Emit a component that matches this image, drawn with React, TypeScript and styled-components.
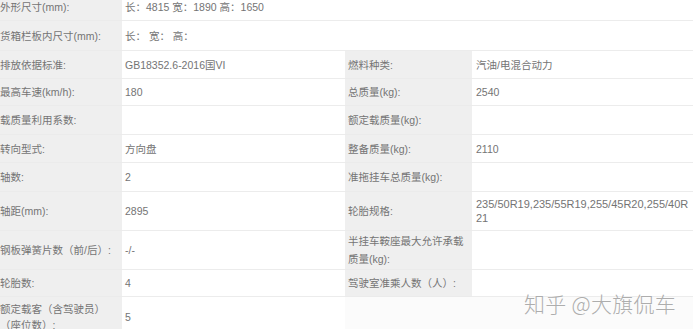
import React from "react";
import styled, { createGlobalStyle } from "styled-components";

const Global = createGlobalStyle`
  html, body { margin: 0; padding: 0; background: #ffffff; overflow: hidden; }
  body { width: 693px; height: 329px; }
`;

const Page = styled.div`
  position: relative;
  width: 693px;
  height: 329px;
  overflow: hidden;
  background: #fbfbfb;
  font-family: "Liberation Sans", "Noto Sans CJK SC", sans-serif;
  font-size: 10.5px;
  color: #747474;
`;

const Table = styled.div`
  margin-top: -7px;
  margin-left: -4px;
  width: 697px;
  display: flex;
  flex-direction: column;
`;

const Row = styled.div<{ $h: number }>`
  display: grid;
  grid-template-columns: 126px 223px 127px 1fr;
  height: ${(p) => p.$h}px;
`;

const Label = styled.div`
  background: #efefef;
  display: flex;
  align-items: center;
  padding: 0 9px 0 4px;
  line-height: 16px;
  border-bottom: 1px solid #ebebeb;
`;

const RightLabel = styled(Label)`
  padding: 0 3px 0 3px;
  line-height: 18px;
`;

const Value = styled.div<{ $span?: number }>`
  background: #ffffff;
  grid-column: span ${(p) => p.$span ?? 1};
  display: flex;
  align-items: center;
  padding: 0 0 0 3px;
  line-height: 14px;
  border-bottom: 1px solid #ececec;
`;

const RightValue = styled(Value)`
  padding-left: 4px;
  white-space: nowrap;
`;

const Empty = styled.div`
  grid-column: span 2;
  background: #fbfbfb;
`;

const Lines = styled.div`
  display: flex;
  flex-direction: column;
  font-size: 11px;
`;

const Watermark = styled.div`
  position: absolute;
  left: 524px;
  top: 288px;
  font-family: "Noto Sans CJK SC", sans-serif;
  font-weight: 300;
  font-size: 21px;
  letter-spacing: 0.3px;
  color: #adadad;
  white-space: nowrap;
  text-shadow: 0 0 2px #ffffff;
`;

type Cell = [string, React.ReactNode, string?, React.ReactNode?];

const quad: { h: number; c: Cell }[] = [
  { h: 28, c: ["排放依据标准:", "GB18352.6-2016国VI", "燃料种类:", "汽油/电混合动力"] },
  { h: 27, c: ["最高车速(km/h):", "180", "总质量(kg):", "2540"] },
  { h: 29, c: ["载质量利用系数:", "", "额定载质量(kg):", ""] },
  { h: 28, c: ["转向型式:", "方向盘", "整备质量(kg):", "2110"] },
  { h: 29, c: ["轴数:", "2", "准拖挂车总质量(kg):", ""] },
  {
    h: 39,
    c: [
      "轴距(mm):",
      "2895",
      "轮胎规格:",
      <Lines>
        <span>235/50R19,235/55R19,255/45R20,255/40R</span>
        <span>21</span>
      </Lines>,
    ],
  },
  { h: 39, c: ["钢板弹簧片数（前/后）:", "-/-", "半挂车鞍座最大允许承载质量(kg):", ""] },
  { h: 27, c: ["轮胎数:", "4", "驾驶室准乘人数（人）:", ""] },
];

export default function App() {
  return (
    <Page>
      <Global />
      <Table>
        <Row $h={28}>
          <Label>外形尺寸(mm):</Label>
          <Value $span={3}>长：4815 宽：1890 高：1650</Value>
        </Row>
        <Row $h={30}>
          <Label>货箱栏板内尺寸(mm):</Label>
          <Value $span={3}>长：&nbsp;宽：&nbsp;高：</Value>
        </Row>
        {quad.map((r, i) => (
          <Row key={i} $h={r.h}>
            <Label>{r.c[0]}</Label>
            <Value>{r.c[1]}</Value>
            <RightLabel>{r.c[2]}</RightLabel>
            <RightValue>{r.c[3]}</RightValue>
          </Row>
        ))}
        <Row $h={40}>
          <Label>额定载客（含驾驶员）（座位数）:</Label>
          <Value>5</Value>
          <Empty />
        </Row>
      </Table>
      <Watermark>知乎 @大旗侃车</Watermark>
    </Page>
  );
}
